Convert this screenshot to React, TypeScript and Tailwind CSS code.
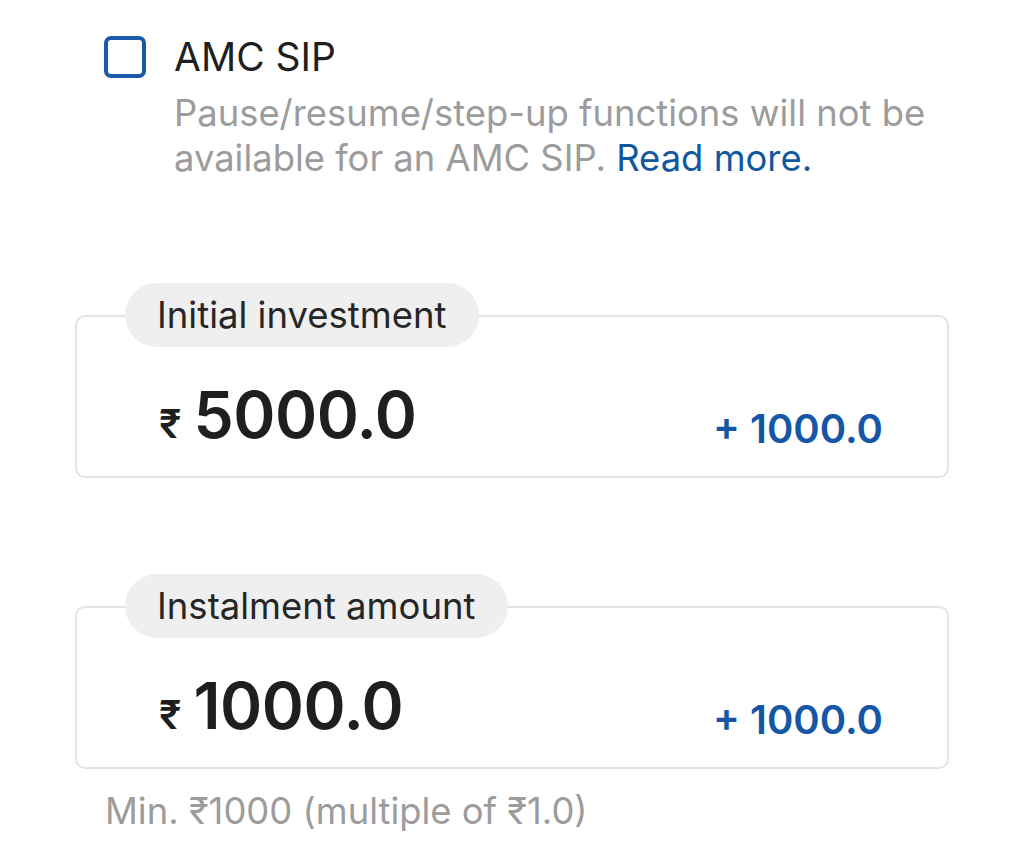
import React from "react";

const font = { fontFamily: "Inter, 'Noto Sans', 'DejaVu Sans', sans-serif" };

function AmountCard({ label, amount }: { label: string; amount: string }) {
  return (
    <div className="flex flex-col">
      <div className="relative z-10 ml-[50px] self-start rounded-full bg-[#efefef] px-[32px] py-[12px] text-[36.5px] leading-[40px] text-[#262626]">
        {label}
      </div>
      <div className="-mt-[32px] rounded-[10px] border-2 border-[#e4e4e4] bg-white pb-[29px] pl-[82px] pr-[64px] pt-[66px]">
        <div className="flex items-baseline justify-between">
          <div className="flex items-baseline text-[#1f1f1f]">
            <span className="mr-[12px] text-[40px] font-semibold leading-none">₹</span>
            <span className="text-[64px] font-semibold leading-none tracking-[-0.5px]">{amount}</span>
          </div>
          <span className="translate-y-[5px] text-[40px] font-semibold leading-none text-[#1557a6]">+ 1000.0</span>
        </div>
      </div>
    </div>
  );
}

export default function App() {
  return (
    <div className="min-h-[862px] w-[1024px] bg-white px-[75px] pt-[36px]" style={font}>
      <div className="flex items-start gap-[28px] pl-[29px]">
        <span className="h-[42px] w-[42px] shrink-0 rounded-[7px] border-[4px] border-[#1b5aa8]" />
        <div className="flex flex-col">
          <span className="text-[39px] leading-[42px] text-[#1f1f1f]">AMC SIP</span>
          <p className="mt-[13px] text-[36.4px] leading-[45px] text-[#9c9c9c]">
            Pause/resume/step-up functions will not be available for an AMC SIP.{" "}
            <span className="text-[#12589f]">Read more.</span>
          </p>
        </div>
      </div>

      <div className="mt-[102px] flex flex-col gap-[96px]">
        <AmountCard label="Initial investment" amount="5000.0" />
        <AmountCard label="Instalment amount" amount="1000.0" />
      </div>
      <p className="mt-[20px] pl-[30px] text-[36.4px] leading-[45px] text-[#9c9c9c]">
        Min. ₹1000 (multiple of ₹1.0)
      </p>
    </div>
  );
}
